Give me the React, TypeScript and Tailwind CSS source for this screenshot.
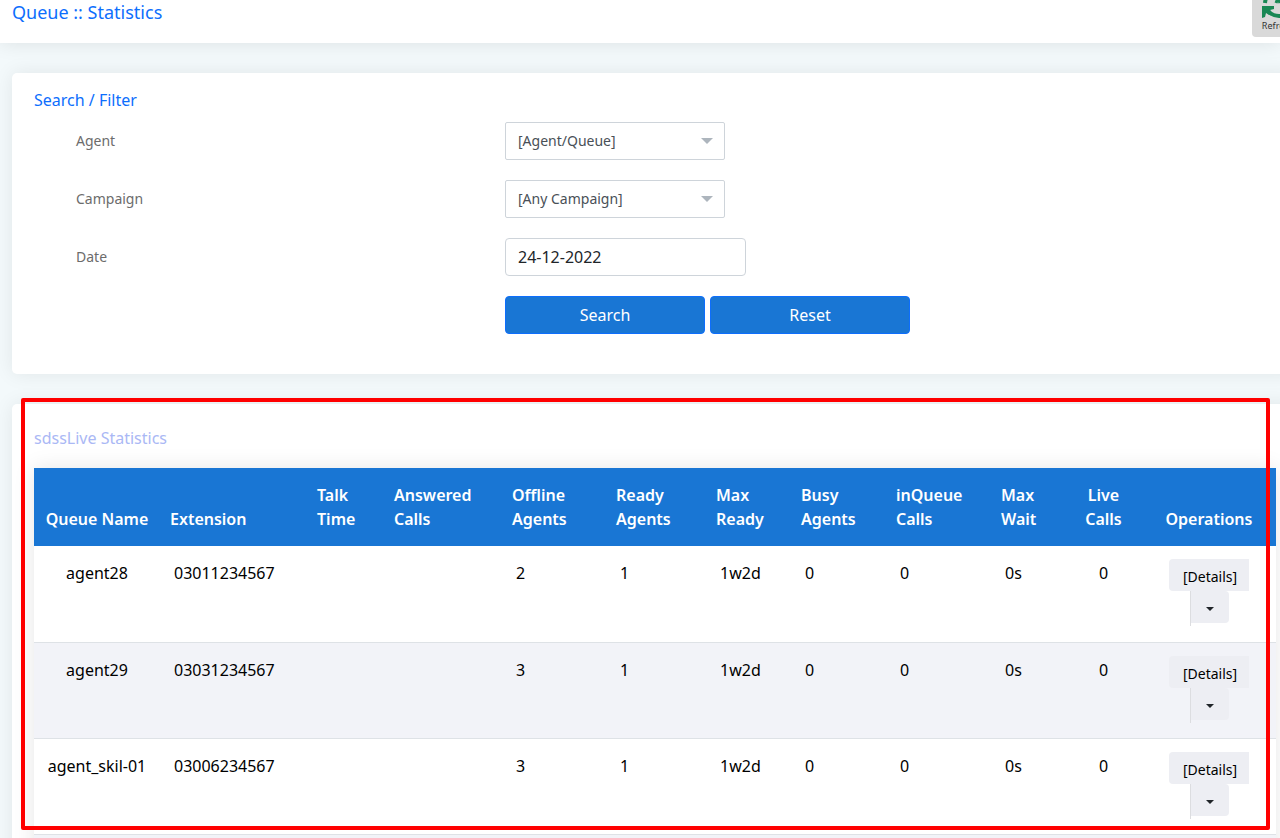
const columns = [
  { label: 'Queue Name', width: 'w-[126px]', center: true },
  { label: 'Extension', width: 'w-[147px]' },
  { label: 'Talk Time', width: 'w-[77px]' },
  { label: 'Answered Calls', width: 'w-[118px]' },
  { label: 'Offline Agents', width: 'w-[104px]' },
  { label: 'Ready Agents', width: 'w-[100px]' },
  { label: 'Max Ready', width: 'w-[85px]' },
  { label: 'Busy Agents', width: 'w-[95px]' },
  { label: 'inQueue Calls', width: 'w-[105px]' },
  { label: 'Max Wait', width: 'w-[74px]' },
  { label: 'Live Calls', width: 'w-[77px]', center: true },
  { label: 'Operations', width: 'w-[134px]', center: true },
];

const rows = [
  ['agent28', '03011234567', '', '', '2', '1', '1w2d', '0', '0', '0s', '0'],
  ['agent29', '03031234567', '', '', '3', '1', '1w2d', '0', '0', '0s', '0'],
  ['agent_skil-01', '03006234567', '', '', '3', '1', '1w2d', '0', '0', '0s', '0'],
];

function RefreshIcon() {
  return (
    <svg viewBox="0 0 34 34" className="h-[34px] w-[34px] shrink-0 text-[#198754]" fill="none" stroke="currentColor" strokeWidth="4">
      <path d="M4 18C5 9 10 4 17 4c5 0 9 2 12 6" />
      <path d="M17 13l-2 5M17 13l2 5" strokeWidth="3" />
      <path d="M7 26c3 3 7 5 11 5 6 0 10-4 12-11" />
      <path d="M1 21h12v3l-4 1 2 3-3 2-3-2-1 4-3 1z" fill="currentColor" stroke="none" />
      <path d="M33 13H21v-3l4-1-2-3 3-2 3 2 1-4 3-1z" fill="currentColor" stroke="none" />
    </svg>
  );
}

function FilterSelect({ id, label, option }: { id: string; label: string; option: string }) {
  return (
    <>
      <label htmlFor={id} className="text-sm text-[#6c6c6c]">{label}</label>
      <div className="relative w-[220px]">
        <select
          id={id}
          className="block h-[38px] w-full appearance-none rounded-xs border border-[#ced4da] bg-white px-3 text-sm text-[#495057]"
        >
          <option>{option}</option>
        </select>
        <svg viewBox="0 0 12 6" className="pointer-events-none absolute top-4 right-3 h-1.5 w-3 fill-[#adb5bd]">
          <path d="M0 0h12L6 6z" />
        </svg>
      </div>
    </>
  );
}

function Operations() {
  return (
    <div className="flex flex-col items-center">
      <button type="button" className="h-8 w-20 rounded-l bg-[#edeef3] pt-1 pl-0.5 text-sm text-black">
        [Details]
      </button>
      <div className="h-[35px] border-l border-[#dcdde0]">
        <button
          type="button"
          aria-label="More operations"
          className="flex h-8 w-[38px] items-center justify-center rounded-r bg-[#edeef3] pt-1"
        >
          <svg viewBox="0 0 8 4" className="h-1 w-2 fill-[#212529]">
            <path d="M0 0h8L4 4z" />
          </svg>
        </button>
      </div>
    </div>
  );
}

export default function App() {
  return (
    <div className="h-screen overflow-hidden bg-[#f3f9fb] font-['Noto_Sans',sans-serif] text-base text-black">
      <header className="flex h-[43px] items-start justify-between bg-white pl-3 shadow-[0_0_20px_rgba(0,0,0,0.1)]">
        <h1 className="text-lg leading-6 text-[#0d6efd]">Queue :: Statistics</h1>
        <button
          type="button"
          className="-mr-6 flex h-[37px] w-[52px] shrink-0 flex-col items-center justify-end rounded-b bg-[#d9d9d9] pb-1 text-[9px] leading-[14px] text-[#333]"
        >
          <RefreshIcon />
          Refresh
        </button>
      </header>

      <main className="-mr-4 flex flex-col gap-[30px] pt-[30px] pl-3">
        <section className="rounded-[5px] bg-white px-[22px] pt-[15px] pb-10 shadow-[0_0_20px_rgba(0,0,0,0.08)]">
          <h2 className="leading-6 text-[#0d6efd]">Search / Filter</h2>
          <form className="mt-2.5 grid grid-cols-[429px_1fr] items-center gap-y-5 pl-[42px]">
            <FilterSelect id="agent" label="Agent" option="[Agent/Queue]" />
            <FilterSelect id="campaign" label="Campaign" option="[Any Campaign]" />
            <label htmlFor="date" className="text-sm text-[#6c6c6c]">Date</label>
            <input
              id="date"
              type="text"
              defaultValue="24-12-2022"
              className="h-[38px] w-[241px] rounded border border-[#ced4da] px-3 text-[#212529]"
            />
            <div className="col-start-2 flex gap-[5px]">
              <button type="button" className="h-[38px] w-[200px] rounded border border-[#0d6efd] bg-[#1976d4] text-white">
                Search
              </button>
              <button type="reset" className="h-[38px] w-[200px] rounded border border-[#0d6efd] bg-[#1976d4] text-white">
                Reset
              </button>
            </div>
          </form>
        </section>

        <section className="relative rounded-[5px] bg-white pt-[22px] pr-5 pb-10 pl-[22px] shadow-[0_0_20px_rgba(0,0,0,0.08)]">
          <h2 className="leading-6 text-[#aab8f5]">sdssLive Statistics</h2>
          <table className="mt-[18px] w-full table-fixed border-collapse shadow-[0_0_20px_rgba(0,0,0,0.1)]">
            <thead className="bg-[#1976d4] text-left text-white">
              <tr>
                {columns.map((col) => (
                  <th
                    key={col.label}
                    className={`${col.width} py-[15px] align-bottom leading-6 font-semibold ${col.center ? 'px-2.5 text-center' : 'pr-4 pl-2.5'}`}
                  >
                    {col.label}
                  </th>
                ))}
              </tr>
            </thead>
            <tbody className="bg-white">
              {rows.map((row) => (
                <tr key={row[0]} className="h-24 border-b border-[#dee2e6] even:bg-[#f2f3f8]">
                  {row.map((value, i) => (
                    <td
                      key={columns[i].label}
                      className={`pt-[15px] align-top leading-6 ${columns[i].center ? 'text-center' : 'pl-3.5'}`}
                    >
                      {value}
                    </td>
                  ))}
                  <td className="pt-[13px] align-top">
                    <Operations />
                  </td>
                </tr>
              ))}
              <tr className="h-24 bg-[#f2f3f8]">
                <td colSpan={12} />
              </tr>
            </tbody>
          </table>
          <div className="pointer-events-none absolute -top-1.5 right-[26px] left-[9px] h-[432px] rounded-xs border-4 border-[#ff0000]" />
        </section>
      </main>
    </div>
  );
}
